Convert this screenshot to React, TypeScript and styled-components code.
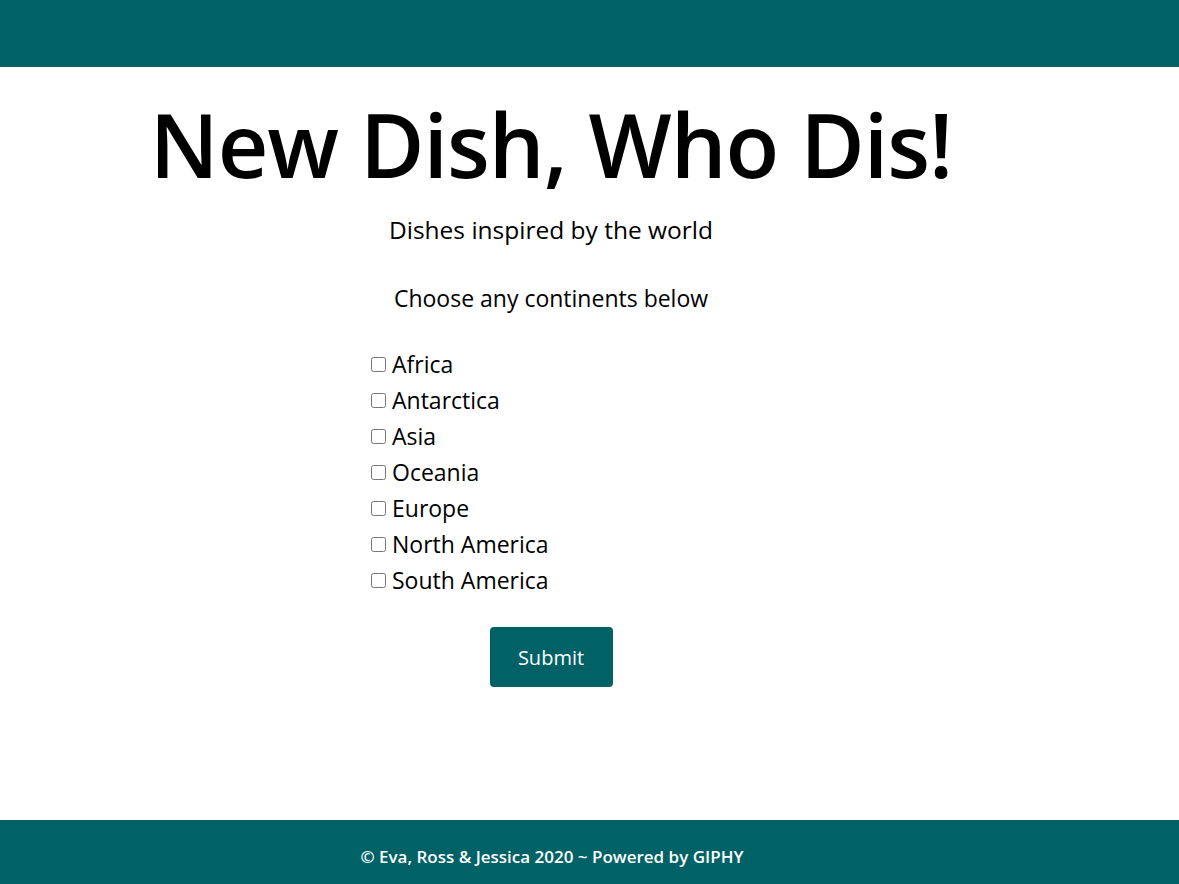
import React from "react";
import styled, { createGlobalStyle } from "styled-components";

const Global = createGlobalStyle`
  html, body { margin: 0; padding: 0; background: #fff; }
  body { font-family: "Open Sans", "Noto Sans", sans-serif; color: #000; }
`;

const Page = styled.div`
  min-height: 884px;
  display: flex;
  flex-direction: column;
`;

const Header = styled.header`
  height: 67px;
  background: #006266;
`;

const Main = styled.main`
  flex: 1;
  width: 1102px;
  display: flex;
  flex-direction: column;
  align-items: center;
`;

const Title = styled.h1`
  margin: 17px 0 0;
  font-size: 88px;
  font-weight: 600;
  line-height: 120px;
  letter-spacing: -1px;
`;

const Subtitle = styled.p`
  margin: 10px 0 0;
  font-size: 24.5px;
  line-height: 32px;
`;

const Prompt = styled.p`
  margin: 36px 0 0;
  font-size: 23px;
  line-height: 32px;
`;

const Form = styled.form`
  width: 360px;
  margin-top: 32px;
  display: flex;
  flex-direction: column;
`;

const Row = styled.label`
  display: flex;
  align-items: center;
  height: 36px;
  font-size: 23px;
`;

const Box = styled.input`
  width: 15px;
  height: 15px;
  margin: 0 6px 0 0;
`;

const Button = styled.button`
  align-self: center;
  margin-top: 29px;
  width: 123px;
  height: 60px;
  border: none;
  border-radius: 4px;
  background: #006266;
  color: #fff;
  font-family: "Open Sans", sans-serif;
  font-size: 20px;
`;

const Footer = styled.footer`
  height: 64px;
  background: #006266;
  color: #fff;
  display: flex;
  align-items: center;
  justify-content: center;
  width: 100%;
`;

const FooterText = styled.div`
  width: 1102px;
  text-align: center;
  font-size: 17px;
  font-weight: 600;
  margin: 8px 75px 0 0;
`;

const continents = [
  "Africa",
  "Antarctica",
  "Asia",
  "Oceania",
  "Europe",
  "North America",
  "South America",
];

export default function App() {
  return (
    <Page>
      <Global />
      <Header />
      <Main>
        <Title>New Dish, Who Dis!</Title>
        <Subtitle>Dishes inspired by the world</Subtitle>
        <Prompt>Choose any continents below</Prompt>
        <Form onSubmit={(e) => e.preventDefault()}>
          {continents.map((c) => (
            <Row key={c}>
              <Box type="checkbox" />
              {c}
            </Row>
          ))}
          <Button type="submit">Submit</Button>
        </Form>
      </Main>
      <Footer>
        <FooterText>© Eva, Ross &amp; Jessica 2020 ~ Powered by GIPHY</FooterText>
      </Footer>
    </Page>
  );
}
